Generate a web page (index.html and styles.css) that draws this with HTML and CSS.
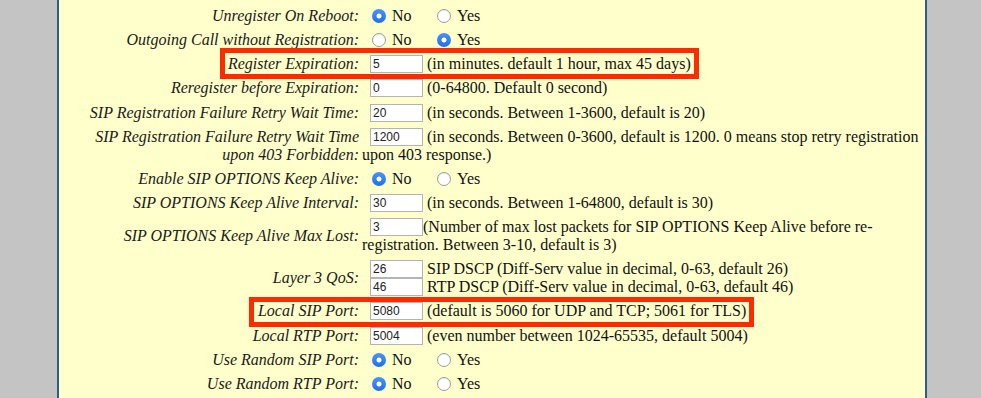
FILE: index.html
```html
<!DOCTYPE html>
<html>
<head>
<meta charset="utf-8">
<link rel="stylesheet" href="styles.css">
</head>
<body>
<div class="panel">
  <div class="form">
    <div class="row">
      <div class="lbl">Unregister On Reboot:</div>
      <div class="val radios"><label class="opt"><input type="radio" name="r1" checked>No</label><label class="opt"><input type="radio" name="r1">Yes</label></div>
    </div>
    <div class="row">
      <div class="lbl">Outgoing Call without Registration:</div>
      <div class="val radios"><label class="opt"><input type="radio" name="r2">No</label><label class="opt"><input type="radio" name="r2" checked>Yes</label></div>
    </div>
    <div class="row">
      <div class="lbl">Register Expiration:</div>
      <div class="val"><input class="box" type="text" value="5"> (in minutes. default 1 hour, max 45 days)</div>
      <div class="mark mark-exp"></div>
    </div>
    <div class="row">
      <div class="lbl">Reregister before Expiration:</div>
      <div class="val"><input class="box" type="text" value="0"> (0-64800. Default 0 second)</div>
    </div>
    <div class="row">
      <div class="lbl">SIP Registration Failure Retry Wait Time:</div>
      <div class="val"><input class="box" type="text" value="20"> (in seconds. Between 1-3600, default is 20)</div>
    </div>
    <div class="row">
      <div class="lbl">SIP Registration Failure Retry Wait Time upon 403 Forbidden:</div>
      <div class="val"><input class="box" type="text" value="1200"> (in seconds. Between 0-3600, default is 1200. 0 means stop retry registration upon 403 response.)</div>
    </div>
    <div class="row">
      <div class="lbl">Enable SIP OPTIONS Keep Alive:</div>
      <div class="val radios"><label class="opt"><input type="radio" name="r3" checked>No</label><label class="opt"><input type="radio" name="r3">Yes</label></div>
    </div>
    <div class="row">
      <div class="lbl">SIP OPTIONS Keep Alive Interval:</div>
      <div class="val"><input class="box" type="text" value="30"> (in seconds. Between 1-64800, default is 30)</div>
    </div>
    <div class="row">
      <div class="lbl">SIP OPTIONS Keep Alive Max Lost:</div>
      <div class="val"><input class="box" type="text" value="3">(Number of max lost packets for SIP OPTIONS Keep Alive before re-registration. Between 3-10, default is 3)</div>
    </div>
    <div class="row">
      <div class="lbl">Layer 3 QoS:</div>
      <div class="val"><input class="box" type="text" value="26"> SIP DSCP (Diff-Serv value in decimal, 0-63, default 26)<br><input class="box" type="text" value="46"> RTP DSCP (Diff-Serv value in decimal, 0-63, default 46)</div>
    </div>
    <div class="row">
      <div class="lbl">Local SIP Port:</div>
      <div class="val"><input class="box" type="text" value="5080"> (default is 5060 for UDP and TCP; 5061 for TLS)</div>
      <div class="mark mark-sip"></div>
    </div>
    <div class="row">
      <div class="lbl">Local RTP Port:</div>
      <div class="val"><input class="box" type="text" value="5004"> (even number between 1024-65535, default 5004)</div>
    </div>
    <div class="row">
      <div class="lbl">Use Random SIP Port:</div>
      <div class="val radios"><label class="opt"><input type="radio" name="r4" checked>No</label><label class="opt"><input type="radio" name="r4">Yes</label></div>
    </div>
    <div class="row">
      <div class="lbl">Use Random RTP Port:</div>
      <div class="val radios"><label class="opt"><input type="radio" name="r5" checked>No</label><label class="opt"><input type="radio" name="r5">Yes</label></div>
    </div>
  </div>
</div>
</body>
</html>
```
FILE: styles.css
```css
html, body {
  margin: 0;
  padding: 0;
  background: #c4c4c4;
  height: 100%;
  overflow: hidden;
}
.panel {
  margin-left: 57px;
  width: 866px;
  height: 100%;
  background: #ffffcc;
  border-left: 2px solid #2e5e8e;
  border-right: 2px solid #2e5e8e;
  font-family: "Liberation Serif", "Times New Roman", serif;
  color: #111;
}
.form {
  padding-top: 4px;
}
.row {
  position: relative;
  display: grid;
  grid-template-columns: 303px 560px;
  align-items: center;
  padding: 3px 0 3.15px;
}
.lbl {
  box-sizing: border-box;
  padding: 0 3px 0 13px;
  text-align: right;
  font-style: italic;
  font-size: 16px;
  letter-spacing: 0;
  line-height: 18px;
  color: #1a1a1a;
}
.val {
  font-size: 16px;
  line-height: 18px;
}
.box {
  box-sizing: border-box;
  width: 53px;
  height: 18px;
  margin: 0 0 0 8px;
  padding: 0 2px;
  border: 1px solid #b4b4b4;
  background: #fff;
  font-family: "Liberation Sans", Arial, sans-serif;
  font-size: 12px;
  color: #222;
  vertical-align: top;
  outline: none;
}
.radios {
  display: flex;
  align-items: center;
  height: 18px;
}
.opt {
  display: flex;
  align-items: center;
  margin-left: 10px;
  width: 55px;
}
.opt input {
  appearance: none;
  -webkit-appearance: none;
  box-sizing: border-box;
  width: 14px;
  height: 14px;
  margin: 0 6px 0 0;
  border-radius: 50%;
  border: 1px solid #9c9c9c;
  background: #fff;
  box-shadow: inset 0 1px 1px rgba(0,0,0,0.08);
}
.opt input:checked {
  border: none;
  background: radial-gradient(circle, #fff 0 2.2px, transparent 2.8px), linear-gradient(#4b93fb, #1f6ff0);
  box-shadow: none;
}
.mark {
  position: absolute;
  box-sizing: border-box;
  border: 5px solid #ff2a00;
}
.mark-exp {
  left: 161px;
  top: -4px;
  width: 479px;
  height: 31px;
}
.mark-sip {
  left: 190px;
  top: -2px;
  width: 505px;
  height: 30px;
}
```
